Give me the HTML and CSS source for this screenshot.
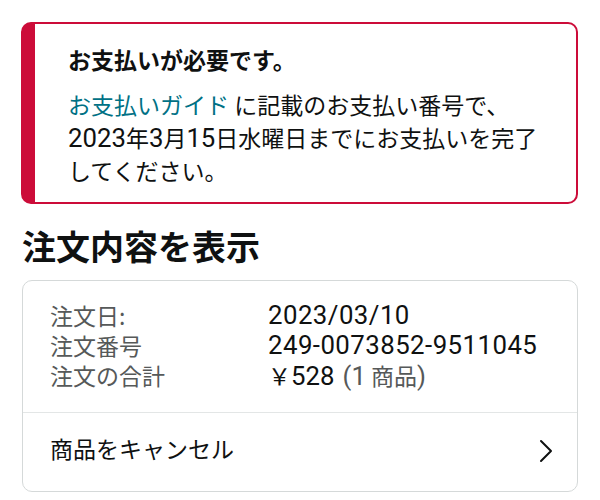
FILE: index.html
```html
<!DOCTYPE html>
<html lang="ja">
<head>
<meta charset="utf-8">
<link rel="stylesheet" href="styles.css">
</head>
<body>
<div class="page">
  <div class="alert">
    <div class="alert-title">お支払いが必要です。</div>
    <p class="alert-text"><a class="link" href="#">お支払いガイド</a> に記載のお支払い番号で、<br><span class="num">2023</span>年<span class="num">3</span>月<span class="num">15</span>日水曜日までにお支払いを完了<br>してください。</p>
  </div>
  <h1 class="heading">注文内容を表示</h1>
  <div class="card">
    <div class="details">
      <div class="row"><span class="label">注文日:</span><span class="value num">2023/03/10</span></div>
      <div class="row"><span class="label">注文番号</span><span class="value num">249-0073852-9511045</span></div>
      <div class="row"><span class="label">注文の合計</span><span class="value">￥<span class="num">528</span> <span class="count"><span class="num">(1</span> 商品<span class="num">)</span></span></span></div>
    </div>
    <div class="action">
      <span class="action-text">商品をキャンセル</span>
      <svg class="chevron" width="14" height="24" viewBox="0 0 14 24"><polyline points="2,2 12,12 2,22" fill="none" stroke="#0f1111" stroke-width="2" stroke-linecap="round" stroke-linejoin="round"/></svg>
    </div>
  </div>
</div>
</body>
</html>
```
FILE: styles.css
```css
* { box-sizing: border-box; }
html, body { margin: 0; padding: 0; background: #ffffff; }
body {
  font-family: "Noto Sans CJK JP", "Noto Sans", sans-serif;
  color: #0f1111;
}
.num {
  font-family: Roboto, "Noto Sans CJK JP", sans-serif;
  font-size: 1.12em;
  line-height: 1;
}
.page {
  padding: 22px 22px 0 21px;
  width: 600px;
}
.alert {
  border: 2px solid #cc0c39;
  border-left-width: 14px;
  border-radius: 10px;
  padding: 20px 10px 15px 33px;
}
.alert-title {
  font-size: 23px;
  line-height: 30px;
  font-weight: 700;
}
.alert-text {
  margin: 14px 0 0 0;
  font-size: 23px;
  line-height: 33px;
}
.link {
  color: #007185;
  text-decoration: none;
}
.heading {
  margin: 22px 0 14px 1px;
  font-size: 34px;
  line-height: 40px;
  font-weight: 700;
}
.card {
  margin-left: 1px;
  border: 1px solid #d5d9d9;
  border-radius: 10px;
}
.details {
  padding: 19px 10px 22px 27px;
  border-bottom: 1px solid #e3e6e6;
}
.row {
  display: flex;
  font-size: 23px;
  line-height: 30px;
}
.label {
  width: 218px;
  flex-shrink: 0;
  color: #565959;
}
.value {
  color: #0f1111;
}
.value.num { font-size: 25.8px; line-height: 30px; letter-spacing: 0.45px; }
.count {
  color: #565959;
  margin-left: 3px;
}
.action {
  display: flex;
  align-items: center;
  justify-content: space-between;
  height: 78px;
  padding: 0 24px 8px 27px;
}
.action-text {
  font-size: 23px;
  line-height: 30px;
}
.chevron { display: block; margin-top: 5px; }
```
